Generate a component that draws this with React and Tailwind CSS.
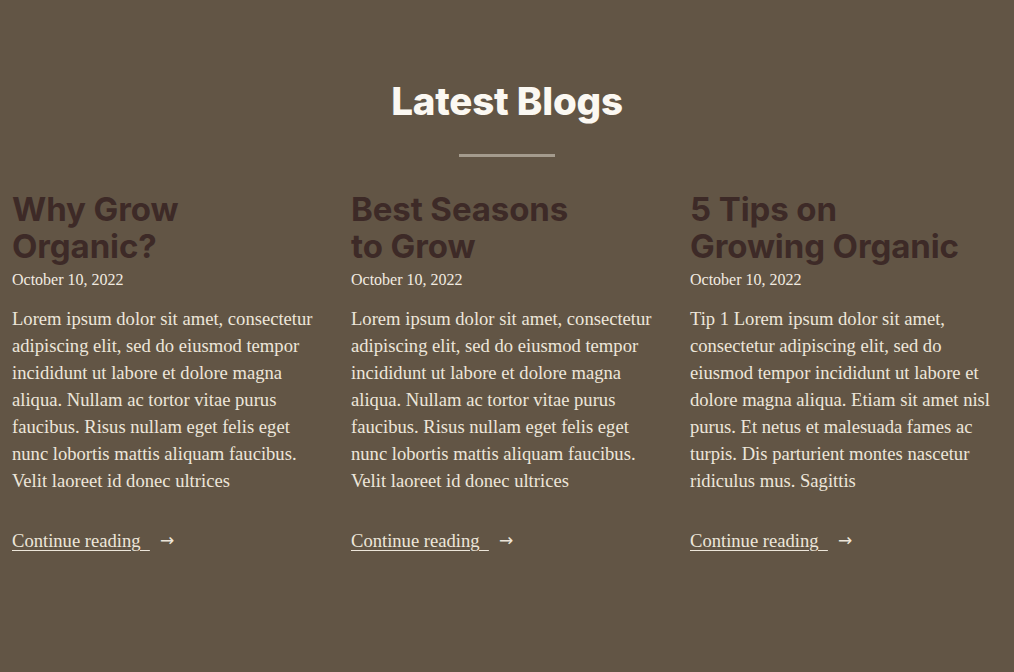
const posts = [
  {
    title: ['Why Grow', 'Organic?'],
    lines: [
      'Lorem ipsum dolor sit amet, consectetur',
      'adipiscing elit, sed do eiusmod tempor',
      'incididunt ut labore et dolore magna',
      'aliqua. Nullam ac tortor vitae purus',
      'faucibus. Risus nullam eget felis eget',
      'nunc lobortis mattis aliquam faucibus.',
      'Velit laoreet id donec ultrices',
    ],
  },
  {
    title: ['Best Seasons', 'to Grow'],
    lines: [
      'Lorem ipsum dolor sit amet, consectetur',
      'adipiscing elit, sed do eiusmod tempor',
      'incididunt ut labore et dolore magna',
      'aliqua. Nullam ac tortor vitae purus',
      'faucibus. Risus nullam eget felis eget',
      'nunc lobortis mattis aliquam faucibus.',
      'Velit laoreet id donec ultrices',
    ],
  },
  {
    title: ['5 Tips on', 'Growing Organic'],
    lines: [
      'Tip 1 Lorem ipsum dolor sit amet,',
      'consectetur adipiscing elit, sed do',
      'eiusmod tempor incididunt ut labore et',
      'dolore magna aliqua. Etiam sit amet nisl',
      'purus. Et netus et malesuada fames ac',
      'turpis. Dis parturient montes nascetur',
      'ridiculus mus. Sagittis',
    ],
  },
];

const PostCard = ({ title, lines }) => {
  return (
    <article className="flex flex-col">
      <h3 className="font-['Inter',sans-serif] font-bold text-[33px] leading-[37px] text-[#3d2a27] tracking-[-0.1px]">
        {title[0]}
        <br />
        {title[1]}
      </h3>
      <p className="mt-[4px] font-['Liberation_Serif',serif] text-[16px] leading-[22px] text-[#f1ebe1]">
        October 10, 2022
      </p>
      <p className="mt-[14px] font-['Liberation_Serif',serif] text-[18.6px] leading-[27px] text-[#ede6da] whitespace-nowrap">
        {lines.map((l, i) => (
          <span key={i}>
            {l}
            <br />
          </span>
        ))}
      </p>
      <a
        href="#"
        className="mt-[33px] flex items-center font-['Liberation_Serif',serif] text-[18.6px] leading-[27px] text-[#ede6da]"
      >
        <span className="underline underline-offset-[3px] whitespace-pre">Continue reading  </span>
        <span className="ml-[10px] font-['DejaVu_Sans',sans-serif] text-[17px] leading-none">→</span>
      </a>
    </article>
  );
};

export default function App() {
  return (
    <div className="min-h-[672px] w-full bg-[#625545] pt-[77px] pb-[100px]">
      <h2 className="text-center font-['Inter',sans-serif] font-extrabold text-[38.5px] leading-[48px] text-[#fbf8f2] tracking-[-0.2px]">
        Latest Blogs
      </h2>
      <div className="mx-auto mt-[29px] h-[3px] w-[96px] bg-[#a49b8d]" />
      <div className="mt-[34px] grid grid-cols-[314px_314px_314px] gap-[25px] pl-[12px]">
        {posts.map((p, i) => (
          <PostCard key={i} {...p} />
        ))}
      </div>
    </div>
  );
}
